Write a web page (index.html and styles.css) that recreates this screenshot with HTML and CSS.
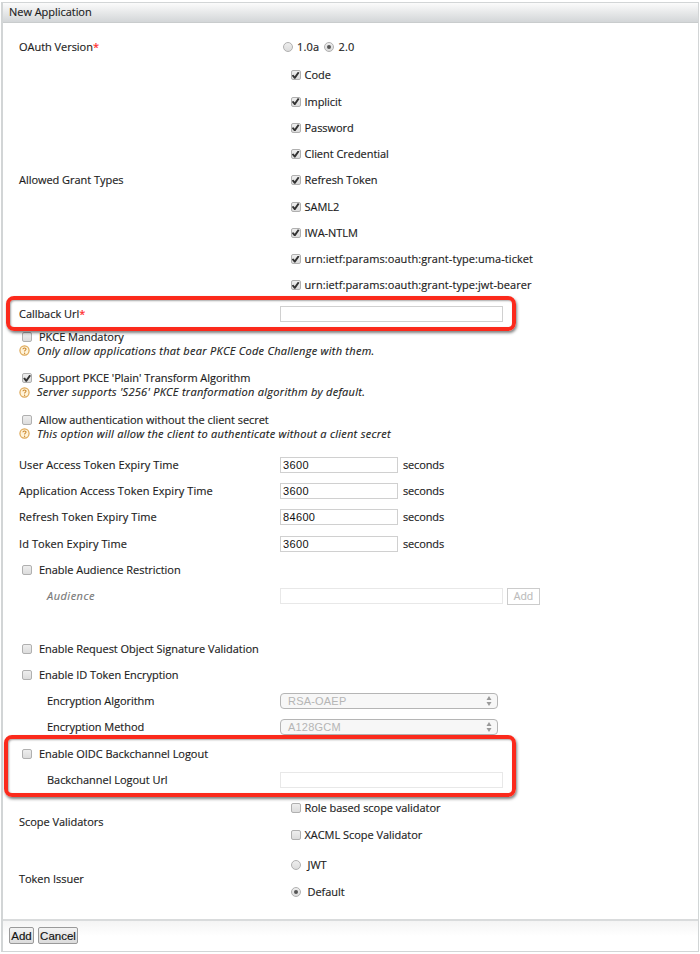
FILE: index.html
```
<!DOCTYPE html>
<html lang="en">
<head>
<meta charset="utf-8">
<title>New Application</title>
<link rel="stylesheet" href="styles.css">
</head>
<body>
<svg class="defs" aria-hidden="true">
  <symbol id="help" viewBox="0 0 12 12"><circle cx="6" cy="6" r="5" fill="#fff3d9" stroke="#dda654" stroke-width="1.3"/><path d="M4.2 4.6C4.4 2.7 7.8 2.8 7.7 4.7C7.6 5.7 6.1 5.8 6.1 7.2" fill="none" stroke="#c98428" stroke-width="1.1"/><circle cx="6.1" cy="9" r=".7" fill="#c98428"/></symbol>
  <symbol id="arrows" viewBox="0 0 6 10"><path d="M3 0L5.5 4H.5zM3 10L.5 6h5z" fill="#999"/></symbol>
</svg>
<form class="panel">
  <h1 class="panel-title">New Application</h1>
  <div class="body">
    <div class="row oauth"><div class="label">OAuth Version<span class="req">*</span></div>
      <div class="versions"><label class="opt"><input type="radio" name="v">1.0a</label><label class="opt"><input type="radio" name="v" checked>2.0</label></div></div>
    <div class="row"><div class="label">Allowed Grant Types</div>
      <div class="options">
        <label class="opt"><input type="checkbox" checked>Code</label>
        <label class="opt"><input type="checkbox" checked>Implicit</label>
        <label class="opt"><input type="checkbox" checked>Password</label>
        <label class="opt"><input type="checkbox" checked>Client Credential</label>
        <label class="opt"><input type="checkbox" checked>Refresh Token</label>
        <label class="opt"><input type="checkbox" checked>SAML2</label>
        <label class="opt"><input type="checkbox" checked>IWA-NTLM</label>
        <label class="opt"><input type="checkbox" checked><span class="urn">urn:ietf:params:oauth:grant-type:uma-ticket</span></label>
        <label class="opt"><input type="checkbox" checked><span class="urn">urn:ietf:params:oauth:grant-type:jwt-bearer</span></label>
      </div></div>
    <div class="callback marked">
      <div class="row"><div class="label">Callback Url<span class="req">*</span></div><input class="text wide" type="text"></div>
    </div>
    <div class="hints">
      <div class="hint"><label class="check"><input type="checkbox">PKCE Mandatory</label><div class="note"><svg class="help"><use href="#help"/></svg><em>Only allow applications that bear PKCE Code Challenge with them.</em></div></div>
      <div class="hint"><label class="check"><input type="checkbox" checked>Support PKCE 'Plain' Transform Algorithm</label><div class="note"><svg class="help"><use href="#help"/></svg><em>Server supports 'S256' PKCE tranformation algorithm by default.</em></div></div>
      <div class="hint"><label class="check"><input type="checkbox">Allow authentication without the client secret</label><div class="note"><svg class="help"><use href="#help"/></svg><em>This option will allow the client to authenticate without a client secret</em></div></div>
    </div>
    <div class="row expiry"><div class="label">User Access Token Expiry Time</div><div class="field"><input class="text short" type="text" value="3600">seconds</div></div>
    <div class="row expiry"><div class="label">Application Access Token Expiry Time</div><div class="field"><input class="text short" type="text" value="3600">seconds</div></div>
    <div class="row expiry"><div class="label">Refresh Token Expiry Time</div><div class="field"><input class="text short" type="text" value="84600">seconds</div></div>
    <div class="row expiry"><div class="label">Id Token Expiry Time</div><div class="field"><input class="text short" type="text" value="3600">seconds</div></div>
    <div class="row"><label class="check"><input type="checkbox">Enable Audience Restriction</label></div>
    <div class="row"><div class="label sub dim">Audience</div><div class="field aud"><input class="text wide off" type="text" disabled><button class="add" type="button" disabled>Add</button></div></div>
    <div class="row"></div>
    <div class="row"><label class="check"><input type="checkbox">Enable Request Object Signature Validation</label></div>
    <div class="row"><label class="check"><input type="checkbox">Enable ID Token Encryption</label></div>
    <div class="row"><div class="label sub">Encryption Algorithm</div><div class="select">RSA-OAEP<svg class="arrows"><use href="#arrows"/></svg></div></div>
    <div class="row"><div class="label sub">Encryption Method</div><div class="select">A128GCM<svg class="arrows"><use href="#arrows"/></svg></div></div>
    <div class="logout marked">
      <div class="row"><label class="check"><input type="checkbox">Enable OIDC Backchannel Logout</label></div>
      <div class="row"><div class="label sub">Backchannel Logout Url</div><input class="text wide off" type="text" disabled></div>
    </div>
    <div class="row scope"><div class="label">Scope Validators</div>
      <div class="options"><label class="opt"><input type="checkbox">Role based scope validator</label><label class="opt"><input type="checkbox">XACML Scope Validator</label></div></div>
    <div class="row issuer"><div class="label">Token Issuer</div>
      <div class="options"><label class="opt"><input type="radio" name="i">JWT</label><label class="opt"><input type="radio" name="i" checked>Default</label></div></div>
  </div>
  <div class="footer"><button class="btn" type="button">Add</button><button class="btn cancel" type="button">Cancel</button></div>
</form>
</body>
</html>
```
FILE: styles.css
```
* { box-sizing: border-box; }
body { margin: 0; padding: 2px 0 0 1px; background: #fff; font: 11px/14px "Open Sans", sans-serif; letter-spacing: -.04px; color: #1c1c1c; white-space: nowrap; -webkit-text-stroke: .15px currentColor; }
.defs { display: block; width: 0; height: 0; }
.panel { width: 698px; height: 950px; margin: 0; border: 1px solid #d2d5d6; border-width: 1px 1px 1px 2px; display: flex; flex-direction: column; }
.panel-title { margin: 0; height: 20px; flex: none; padding-left: 6px; font-size: 11px; font-weight: 400; line-height: 18px; background: linear-gradient(#fbfbfb, #d3d6d8); border-bottom: 1px solid #c9cccd; }
.body { flex: 1; padding: 10.8px 0 0 16px; }
.row { display: grid; grid-template-columns: 261px 1fr; align-items: center; min-height: 26.25px; }
.oauth { margin-bottom: 2.2px; }
.oauth .opt { letter-spacing: .2px; }
.req { color: #f22; }
.versions { display: flex; gap: 5px; padding-left: 3px; }
.options { display: grid; grid-auto-rows: 26.25px; padding-left: 10.5px; }
.opt { display: flex; align-items: center; gap: 4px; }
.urn { letter-spacing: .07px; }
.expiry .label { letter-spacing: .08px; }
.issuer .opt { gap: 7px; }
.check { display: flex; align-items: center; gap: 7px; padding-left: 3px; height: 14px; }
input[type=checkbox], input[type=radio] { appearance: none; flex: none; margin: 0; width: 10px; height: 10px; border: 1px solid #b0b0b0; border-radius: 2px; background: linear-gradient(#eee, #dcdcdc); display: grid; place-items: center; }
input[type=radio] { border-radius: 50%; }
input[type=radio]:checked::after { content: ""; width: 4px; height: 4px; border-radius: 50%; background: #555; }
input[type=checkbox]:checked::after { content: ""; width: 8px; height: 7px; background: #333; clip-path: polygon(2% 52%, 24% 40%, 40% 64%, 80% 0, 100% 12%, 48% 100%, 34% 100%); }
.text { margin: 0; height: 16px; padding: 0 2px; border: 1px solid #d0d0d0; border-radius: 0; background: #fff; font: 11px/14px "Liberation Sans", sans-serif; letter-spacing: .35px; color: #111; -webkit-text-stroke: 0; }
.wide { width: 223px; }
.short { width: 118px; }
.off { border-color: #e8e8e8; }
.field { display: flex; align-items: center; gap: 5px; letter-spacing: -.15px; }
.aud { gap: 4px; }
.add { width: 33px; height: 17px; margin: 0; padding: 0; border: 1px solid #ccc; background: #fff; color: #bbb; font: 10.5px/14px "Open Sans", sans-serif; }
.marked { position: relative; }
.marked::after { content: ""; box-sizing: border-box; position: absolute; border: 4px solid #fb2a1c; border-radius: 8px; box-shadow: 1px 2px 3px rgba(0,0,0,.5), inset 1px 1px 2px rgba(0,0,0,.35); pointer-events: none; }
.callback { margin: 2.4px 0 2.7px; }
.callback::after { left: -13px; width: 510px; top: -5px; height: 35px; }
.logout::after { left: -15px; width: 512px; top: -5px; height: 62px; }
.hints { display: grid; gap: 13.5px; margin-bottom: 10.9px; }
.note { display: flex; align-items: center; gap: 7px; height: 14px; letter-spacing: .27px; }
.help { width: 11px; height: 11px; flex: none; }
.sub { padding-left: 28px; }
.dim { color: #777; font-style: italic; letter-spacing: .5px; }
.select { width: 218px; height: 16px; padding: 0 5px 0 7px; display: flex; align-items: center; justify-content: space-between; border: 1px solid #b5b5b5; border-radius: 4px; background: #f7f7f7; color: #b5b5b5; font: 11px/14px "Liberation Sans", sans-serif; letter-spacing: .2px; -webkit-text-stroke: 0; }
.arrows { width: 6px; height: 10px; }
.scope { margin-top: 2.3px; }
.issuer { margin-top: 4.5px; }
.footer { flex: none; height: 32px; display: flex; align-items: flex-start; gap: 4px; padding: 6px 0 0 6px; border-top: 2px solid #d9dbdc; background: linear-gradient(#f4f4f4, #fff 50%); }
.btn { height: 17px; width: 25px; margin: 0; padding: 0; border: 1px solid #9a9a9a; border-radius: 2px; background: linear-gradient(#f3f3f3, #dcdcdc); color: #111; font: 11.5px/14px "Liberation Sans", sans-serif; }
.cancel { width: 40px; }
```
